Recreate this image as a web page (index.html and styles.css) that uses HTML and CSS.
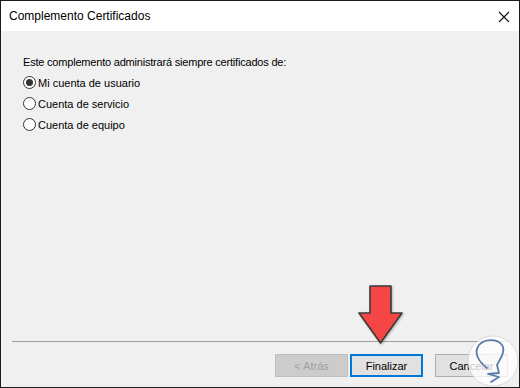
FILE: index.html
```html
<!DOCTYPE html>
<html lang="es">
<head>
    <meta charset="UTF-8">
    <title>Complemento Certificados</title>
    <link rel="stylesheet" href="styles.css">
</head>
<body>
    <div class="window">
        <div class="titlebar">
            <span class="title">Complemento Certificados</span>
            <span class="close">
                <svg width="12" height="12" viewBox="0 0 12 12"><path d="M1 1L11 11M11 1L1 11" stroke="#111" stroke-width="1.1" fill="none"/></svg>
            </span>
        </div>

        <div class="body">
            <div class="content">
                <p class="intro">Este complemento administrará siempre certificados de:</p>
                <label class="radio"><span class="dot checked"></span>Mi cuenta de usuario</label>
                <label class="radio"><span class="dot"></span>Cuenta de servicio</label>
                <label class="radio"><span class="dot"></span>Cuenta de equipo</label>
            </div>

            <div class="footer">
                <div class="separator"></div>
                <div class="buttons">
                    <button class="button" disabled>&lt; Atrás</button>
                    <button class="button default">Finalizar</button>
                    <button class="button cancel">Cancelar</button>
                </div>
            </div>
        </div>

        <!-- marker arrow pointing at Finalizar -->
        <svg class="arrow" width="52" height="64" viewBox="0 0 52 64">
            <polygon points="15,3 36,3 36,30 47,30 25.5,60 4,30 15,30" fill="#f54646" stroke="#3a3a3a" stroke-width="1.6" stroke-linejoin="round"/>
        </svg>

        <!-- watermark -->
        <svg class="watermark" width="52" height="54" viewBox="0 0 52 54">
            <circle cx="26" cy="26" r="25" fill="rgba(255,255,255,0.78)" stroke="rgba(200,200,200,0.6)" stroke-width="1"/>
            <path d="M20 33 C12 27 6 18 12 10 C17 4 30 3 35 10 C39 16 33 24 30 30 L32 38 L21 39 L32 42 L24 47" fill="none" stroke="#5a7cab" stroke-width="1.8" stroke-linecap="round" stroke-linejoin="round"/>
        </svg>
    </div>
</body>
</html>
```

FILE: styles.css
```css
* {
    box-sizing: border-box;
}
body {
    margin: 0;
    font-family: "Liberation Sans", Arial, sans-serif;
    font-size: 11px;
    color: #000;
}
.window {
    position: relative;
    width: 520px;
    height: 388px;
    border: 1px solid #1c1c1c;
    display: flex;
    flex-direction: column;
    background-color: #f0f0f0;
}
.titlebar {
    height: 30px;
    background-color: #fff;
    display: flex;
    align-items: center;
    justify-content: space-between;
    padding: 0 9px 0 8px;
}
.title {
    font-size: 12px;
    color: #000;
}
.close {
    display: flex;
    margin-top: 1px;
}
.body {
    flex: 1;
    display: flex;
    flex-direction: column;
}
.content {
    flex: 1;
    padding: 25px 22px 0;
}
.intro {
    margin: 0 0 4px;
    letter-spacing: -0.2px;
}
.radio {
    display: flex;
    align-items: center;
    height: 21px;
    gap: 2px;
}
.dot {
    width: 13px;
    height: 13px;
    border: 1px solid #333;
    border-radius: 50%;
    background-color: #fff;
    display: flex;
    align-items: center;
    justify-content: center;
}
.dot.checked::after {
    content: "";
    width: 7px;
    height: 7px;
    border-radius: 50%;
    background-color: #333;
}
.separator {
    height: 1px;
    background-color: #a0a0a0;
    margin: 0 11px 0 11px;
}
.buttons {
    display: flex;
    justify-content: flex-end;
    gap: 2px;
    padding: 12px 11px 10px;
}
.button {
    width: 73px;
    height: 23px;
    font-family: inherit;
    font-size: 11px;
    color: #000;
    background-color: #e1e1e1;
    border: 1px solid #adadad;
    padding: 0;
}
.button:disabled {
    color: #a0a0a0;
    background-color: #cccccc;
    border-color: #bfbfbf;
}
.button.default {
    border: 2px solid #0078d7;
}
.button.cancel {
    margin-left: 10px;
}
.arrow {
    position: absolute;
    left: 354px;
    top: 282px;
    filter: drop-shadow(1px 1px 1px rgba(0,0,0,0.25));
}
.watermark {
    position: absolute;
    left: 466px;
    top: 334px;
}
```
